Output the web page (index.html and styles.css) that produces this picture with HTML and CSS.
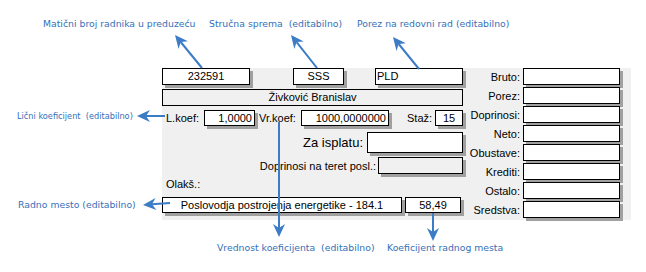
FILE: index.html
```html
<!DOCTYPE html>
<html lang="sr">
<head>
    <meta charset="UTF-8" />
    <meta name="viewport" content="width=device-width, initial-scale=1.0"/>
    <title>Obračun zarade - opis polja</title>
    <link rel="stylesheet" href="styles.css">
</head>
<body>
    <div class="stage">
        <div class="panel">
            <div class="left">
                <div class="row top-row">
                    <div class="field center id-field">232591</div>
                    <div class="field center sss-field">SSS</div>
                    <div class="field pld-field">PLD</div>
                </div>
                <div class="name-field">Živković Branislav</div>
                <div class="row koef-row">
                    <span class="label lkoef-label">L.koef:</span>
                    <div class="field right lkoef-field">1,0000</div>
                    <span class="label vrkoef-label">Vr.koef:</span>
                    <div class="field right vrkoef-field">1000,0000000</div>
                    <span class="label staz-label">Staž:</span>
                    <div class="field center staz-field">15</div>
                </div>
                <div class="row pay-row">
                    <span class="label big">Za isplatu:</span>
                    <div class="field pay-field"></div>
                </div>
                <div class="row contrib-row">
                    <span class="label">Doprinosi na teret posl.:</span>
                    <div class="field disabled contrib-field"></div>
                </div>
                <div class="olaks">Olakš.:</div>
                <div class="row job-row">
                    <div class="field center job-field">Poslovodja postrojenja energetike - 184.1</div>
                    <div class="field center jobkoef-field">58,49</div>
                </div>
            </div>

            <div class="totals">
                <span class="label">Bruto:</span><div class="field"></div>
                <span class="label">Porez:</span><div class="field"></div>
                <span class="label">Doprinosi:</span><div class="field"></div>
                <span class="label">Neto:</span><div class="field"></div>
                <span class="label">Obustave:</span><div class="field"></div>
                <span class="label">Krediti:</span><div class="field"></div>
                <span class="label">Ostalo:</span><div class="field"></div>
                <span class="label">Sredstva:</span><div class="field"></div>
            </div>
        </div>

        <!-- callouts -->
        <div class="note note-id">Matični broj radnika u preduzeću</div>
        <div class="note note-sss">Stručna sprema  (editabilno)</div>
        <div class="note note-tax">Porez na redovni rad (editabilno)</div>
        <div class="note note-lkoef">Lični koeficijent  (editabilno)</div>
        <div class="note note-job">Radno mesto (editabilno)</div>
        <div class="note note-vrkoef">Vrednost koeficijenta  (editabilno)</div>
        <div class="note note-jobkoef">Koeficijent radnog mesta</div>

        <svg class="arrows" width="646" height="272" viewBox="0 0 646 272">
            <g stroke="#3c7bc5" stroke-width="2" fill="none">
                <line x1="202" y1="68" x2="180.7" y2="42"/>
                <line x1="317" y1="68" x2="296.6" y2="42.1"/>
                <line x1="419" y1="69" x2="398.7" y2="44"/>
                <line x1="165" y1="116" x2="146" y2="116"/>
                <line x1="279" y1="122" x2="279" y2="228"/>
                <line x1="170" y1="203" x2="152" y2="204.3"/>
                <line x1="433" y1="213" x2="433" y2="232"/>
            </g>
            <g fill="#3c7bc5">
                <polygon points="175,35 187.9,41.3 180.7,42 178.6,48.9"/>
                <polygon points="291,35 303.8,41.5 296.6,42.1 294.3,48.9"/>
                <polygon points="393,37 405.9,43.3 398.7,44 396.5,50.9"/>
                <polygon points="137,116 150,110 146,116 150,122"/>
                <polygon points="279,237 273,224 279,228 285,224"/>
                <polygon points="143,205 155.5,198.1 152,204.3 156.4,210"/>
                <polygon points="433,241 427,228 433,232 439,228"/>
            </g>
        </svg>
    </div>
</body>
</html>
```

FILE: styles.css
```css
body {
    margin: 0;
    background-color: #fff;
    font-family: "Liberation Sans", Arial, sans-serif;
    font-size: 11px;
    color: #000;
}

.stage {
    position: relative;
    width: 646px;
    height: 272px;
    padding: 68px 0 0 162px;
    box-sizing: border-box;
}

.panel {
    display: flex;
    width: 469px;
    height: 152px;
    background-color: #f0f0f0;
}

.left {
    display: flex;
    flex-direction: column;
    width: 301px;
}

.row {
    display: flex;
    align-items: center;
}

.label {
    white-space: nowrap;
}

.field {
    box-sizing: border-box;
    height: 17px;
    line-height: 15px;
    border: 1px solid #000;
    background-color: #fff;
    box-shadow: 3px 3px 0 #a0a0a0;
    white-space: nowrap;
    overflow: hidden;
}

.center {
    text-align: center;
}

.right {
    text-align: right;
    padding-right: 2px;
}

.disabled {
    background-color: #f0f0f0;
}

/* first row */
.id-field {
    width: 88px;
}

.sss-field {
    width: 51px;
    margin-left: 43px;
}

.pld-field {
    width: 88px;
    margin-left: 31px;
    padding-left: 1px;
}

.name-field {
    box-sizing: border-box;
    height: 17px;
    line-height: 15px;
    margin-top: 4px;
    border: 1px solid #000;
    text-align: center;
}

/* koeficijenti */
.koef-row {
    margin-top: 4px;
}

.koef-row .field {
    height: 16px;
    line-height: 14px;
}

.lkoef-label {
    width: 38px;
    margin-left: 4px;
}

.lkoef-field {
    width: 51px;
}

.vrkoef-label {
    width: 42px;
    margin-left: 4px;
}

.vrkoef-field {
    width: 88px;
}

.staz-label {
    width: 28px;
    margin-left: 18px;
}

.staz-field {
    width: 28px;
}

.pay-row {
    margin-top: 6px;
    justify-content: flex-end;
}

.big {
    font-size: 13px;
    margin-right: 4px;
}

.pay-field {
    width: 96px;
    height: 21px;
}

.contrib-row {
    margin-top: 4px;
    justify-content: flex-end;
}

.contrib-row .label {
    margin-right: 2px;
}

.contrib-field {
    width: 85px;
}

.olaks {
    margin-top: 4px;
    padding-left: 4px;
    height: 13px;
    line-height: 13px;
}

.job-row {
    margin-top: 6px;
}

.job-row .field {
    height: 16px;
    line-height: 14px;
}

.job-field {
    width: 240px;
}

.jobkoef-field {
    width: 56px;
    margin-left: 3px;
}

/* right column */
.totals {
    display: grid;
    grid-template-columns: 57px 97px;
    grid-auto-rows: 17px;
    column-gap: 3px;
    row-gap: 2px;
    align-items: center;
}

.totals .label {
    text-align: right;
}

/* callouts */
.note {
    position: absolute;
    font-family: "DejaVu Sans", sans-serif;
    font-size: 9.3px;
    line-height: 12px;
    color: #3570b8;
    white-space: pre;
}

.note-id {
    left: 43px;
    top: 18px;
}

.note-sss {
    left: 209px;
    top: 18px;
}

.note-tax {
    left: 357px;
    top: 18px;
}

.note-lkoef {
    left: 17px;
    top: 110px;
    font-size: 8.2px;
}

.note-job {
    left: 18px;
    top: 199px;
}

.note-vrkoef {
    left: 217px;
    top: 242px;
}

.note-jobkoef {
    left: 387px;
    top: 242px;
}

.arrows {
    position: absolute;
    left: 0;
    top: 0;
    pointer-events: none;
}
```
